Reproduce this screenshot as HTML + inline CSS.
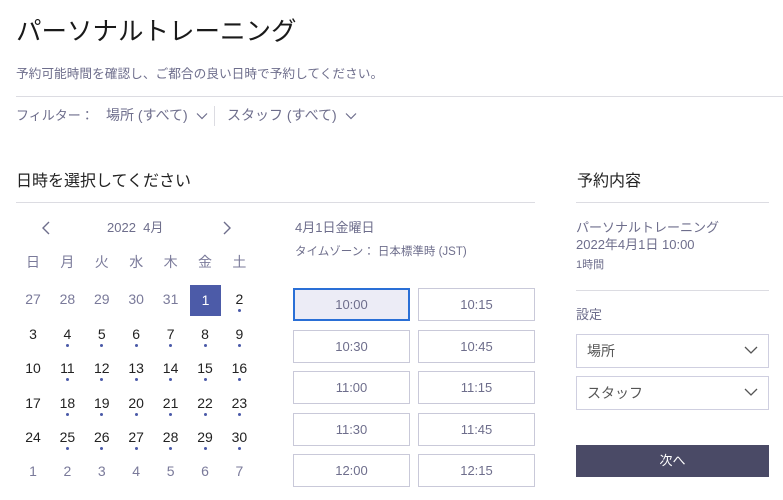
<!DOCTYPE html>
<html><head><meta charset="utf-8"><style>
*{margin:0;padding:0;box-sizing:border-box}
body{width:783px;height:500px;overflow:hidden;background:#fff;font-family:"Liberation Sans","Noto Sans CJK JP",sans-serif;position:relative;color:#222}
.a{position:absolute;white-space:nowrap}
.m{color:#6e6e8c}
.hr{position:absolute;height:1px;background:#dcdce2}
.cal{position:absolute;left:16px;top:0;width:240px}
.c{position:absolute;width:34px;text-align:center;font-size:14px;line-height:16px}
.g{color:#7a7a9a}
.d::after{content:"";position:absolute;left:15.5px;top:18px;width:3px;height:3px;border-radius:50%;background:#4a5aa8}
.t{position:absolute;width:117px;height:33px;border:1px solid #c9c9d9;text-align:center;line-height:31px;font-size:13px;color:#6e6e8c}
.sel{position:absolute;left:576px;width:193px;height:34px;border:1px solid #cfcfe0;font-size:14px;color:#555;padding-left:10px;line-height:32px}
.chev{position:absolute;right:10px;top:10px}
</style></head><body>
<div class="a" style="left:16px;top:15px;font-size:25.5px;line-height:34px;color:#1a1a1a">パーソナルトレーニング</div>
<div class="a m" style="left:16px;top:65px;font-size:12.7px;line-height:18px">予約可能時間を確認し、ご都合の良い日時で予約してください。</div>
<div class="hr" style="left:16px;top:96px;width:767px"></div>
<div class="a m" style="left:16px;top:107px;font-size:13px;line-height:18px">フィルター：</div>
<div class="a m" style="left:106px;top:106px;font-size:14px;line-height:18px">場所 (すべて)
<svg width="12" height="8" style="margin-left:4px" viewBox="0 0 12 8"><path d="M1 1.5l5 5 5-5" fill="none" stroke="#6e6e8c" stroke-width="1.2"/></svg></div>
<div style="position:absolute;left:214px;top:106px;width:1px;height:20px;background:#dcdce2"></div>
<div class="a m" style="left:227px;top:106px;font-size:14px;line-height:18px">スタッフ (すべて)
<svg width="12" height="8" style="margin-left:4px" viewBox="0 0 12 8"><path d="M1 1.5l5 5 5-5" fill="none" stroke="#6e6e8c" stroke-width="1.2"/></svg></div>

<div class="a" style="left:16px;top:172px;font-size:16px;line-height:20px">日時を選択してください</div>
<div class="hr" style="left:16px;top:202px;width:519px"></div>
<div class="a" style="left:577px;top:172px;font-size:16px;line-height:20px">予約内容</div>
<div class="hr" style="left:576px;top:202px;width:193px"></div>

<svg class="a" style="left:41px;top:221px" width="10" height="14" viewBox="0 0 10 14"><path d="M8 1L2 7l6 6" fill="none" stroke="#6e6e8c" stroke-width="1.4"/></svg>
<div class="a m" style="left:107px;top:220px;font-size:13px;line-height:16px">2022&nbsp;&nbsp;4月</div>
<svg class="a" style="left:222px;top:221px" width="10" height="14" viewBox="0 0 10 14"><path d="M2 1l6 6-6 6" fill="none" stroke="#6e6e8c" stroke-width="1.4"/></svg>

<div class="cal">
<div class="c g" style="left:0;top:254px">日</div><div class="c g" style="left:34.4px;top:254px">月</div><div class="c g" style="left:68.8px;top:254px">火</div><div class="c g" style="left:103.2px;top:254px">水</div><div class="c g" style="left:137.6px;top:254px">木</div><div class="c g" style="left:172px;top:254px">金</div><div class="c g" style="left:206.4px;top:254px">土</div>

<div class="c g" style="left:0;top:291px">27</div><div class="c g" style="left:34.4px;top:291px">28</div><div class="c g" style="left:68.8px;top:291px">29</div><div class="c g" style="left:103.2px;top:291px">30</div><div class="c g" style="left:137.6px;top:291px">31</div>
<div style="position:absolute;left:174px;top:285px;width:31px;height:31px;background:#4c5ba8;color:#fff;text-align:center;line-height:31px;font-size:14px">1</div>
<div class="c d" style="left:206.4px;top:291px">2</div>

<div class="c" style="left:0;top:326px">3</div><div class="c d" style="left:34.4px;top:326px">4</div><div class="c d" style="left:68.8px;top:326px">5</div><div class="c d" style="left:103.2px;top:326px">6</div><div class="c d" style="left:137.6px;top:326px">7</div><div class="c d" style="left:172px;top:326px">8</div><div class="c d" style="left:206.4px;top:326px">9</div>

<div class="c" style="left:0;top:360px">10</div><div class="c d" style="left:34.4px;top:360px">11</div><div class="c d" style="left:68.8px;top:360px">12</div><div class="c d" style="left:103.2px;top:360px">13</div><div class="c d" style="left:137.6px;top:360px">14</div><div class="c d" style="left:172px;top:360px">15</div><div class="c d" style="left:206.4px;top:360px">16</div>

<div class="c" style="left:0;top:395px">17</div><div class="c d" style="left:34.4px;top:395px">18</div><div class="c d" style="left:68.8px;top:395px">19</div><div class="c d" style="left:103.2px;top:395px">20</div><div class="c d" style="left:137.6px;top:395px">21</div><div class="c d" style="left:172px;top:395px">22</div><div class="c d" style="left:206.4px;top:395px">23</div>

<div class="c" style="left:0;top:429px">24</div><div class="c d" style="left:34.4px;top:429px">25</div><div class="c d" style="left:68.8px;top:429px">26</div><div class="c d" style="left:103.2px;top:429px">27</div><div class="c d" style="left:137.6px;top:429px">28</div><div class="c d" style="left:172px;top:429px">29</div><div class="c d" style="left:206.4px;top:429px">30</div>

<div class="c g" style="left:0;top:463px">1</div><div class="c g" style="left:34.4px;top:463px">2</div><div class="c g" style="left:68.8px;top:463px">3</div><div class="c g" style="left:103.2px;top:463px">4</div><div class="c g" style="left:137.6px;top:463px">5</div><div class="c g" style="left:172px;top:463px">6</div><div class="c g" style="left:206.4px;top:463px">7</div>
</div>

<div class="a m" style="left:295px;top:219px;font-size:13px;line-height:18px">4月1日金曜日</div>
<div class="a m" style="left:295px;top:244px;font-size:11.5px;line-height:16px">タイムゾーン： 日本標準時 (JST)</div>

<div class="t" style="left:293px;top:288px;background:#ececf6;border:2px solid #2a6fd6;line-height:29px">10:00</div>
<div class="t" style="left:418px;top:288px">10:15</div>
<div class="t" style="left:293px;top:330px">10:30</div>
<div class="t" style="left:418px;top:330px">10:45</div>
<div class="t" style="left:293px;top:371px">11:00</div>
<div class="t" style="left:418px;top:371px">11:15</div>
<div class="t" style="left:293px;top:413px">11:30</div>
<div class="t" style="left:418px;top:413px">11:45</div>
<div class="t" style="left:293px;top:454px">12:00</div>
<div class="t" style="left:418px;top:454px">12:15</div>

<div class="a m" style="left:576px;top:219px;font-size:13px;line-height:17px">パーソナルトレーニング</div>
<div class="a m" style="left:576px;top:236px;font-size:13px;line-height:17px">2022年4月1日 10:00</div>
<div class="a m" style="left:576px;top:258px;font-size:11px;line-height:14px">1時間</div>
<div class="hr" style="left:576px;top:290px;width:193px"></div>
<div class="a m" style="left:576px;top:306px;font-size:13px;line-height:17px">設定</div>
<div class="sel" style="top:334px">場所<svg class="chev" width="14" height="10" viewBox="0 0 14 10"><path d="M1 2l6 6 6-6" fill="none" stroke="#555" stroke-width="1.3"/></svg></div>
<div class="sel" style="top:376px">スタッフ<svg class="chev" width="14" height="10" viewBox="0 0 14 10"><path d="M1 2l6 6 6-6" fill="none" stroke="#555" stroke-width="1.3"/></svg></div>
<div style="position:absolute;left:576px;top:445px;width:193px;height:32px;background:#4a4a66;color:#fff;text-align:center;line-height:32px;font-size:13px">次へ</div>
</body></html>
